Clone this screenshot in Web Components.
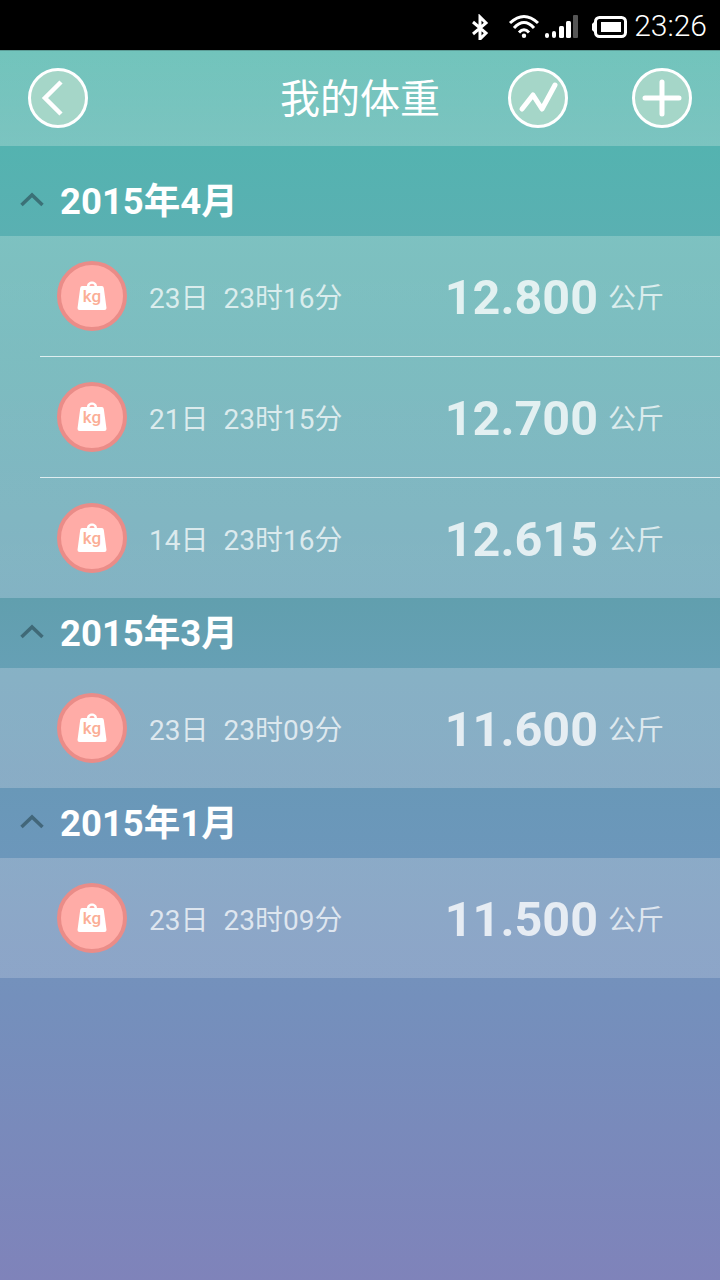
<!DOCTYPE html>
<html lang="zh">
<head>
<meta charset="utf-8">
<title>我的体重</title>
<style>
  html, body { margin: 0; padding: 0; }
  body {
    width: 720px;
    height: 1280px;
    overflow: hidden;
    font-family: Roboto, "Noto Sans CJK SC", sans-serif;
    background: #000;
  }
</style>
</head>
<body>
<weight-app>
  <status-bar slot="status" time="23:26"></status-bar>
  <app-header slot="header" title="我的体重"></app-header>
  <month-group label="2015年4月" tone="#54b3b0,#5ab0b2" wash=".1,.14" first>
    <weight-row day="23日" time="23时16分" value="12.800"></weight-row>
    <weight-row day="21日" time="23时15分" value="12.700"></weight-row>
    <weight-row day="14日" time="23时16分" value="12.615"></weight-row>
  </month-group>
  <month-group label="2015年3月" tone="#619fae,#66a0b5" wash=".16,.17">
    <weight-row day="23日" time="23时09分" value="11.600"></weight-row>
  </month-group>
  <month-group label="2015年1月" tone="#6998b8,#6c97bb" wash=".18,.18">
    <weight-row day="23日" time="23时09分" value="11.500"></weight-row>
  </month-group>
</weight-app>

<script>
class WeightApp extends HTMLElement {
  constructor() {
    super();
    this.attachShadow({ mode: 'open' });
    this.shadowRoot.innerHTML = `
      <style>
        :host { display: flex; flex-direction: column; width: 720px; height: 1280px; }
        main {
          flex: 1;
          display: flex;
          flex-direction: column;
          background: linear-gradient(180deg, #72c4bc 0%, #6cb4b8 25%, #7490bc 77%, #7f83ba 100%);
        }
      </style>
      <slot name="status"></slot>
      <main>
        <slot name="header"></slot>
        <slot></slot>
      </main>
    `;
  }
}

class StatusBar extends HTMLElement {
  constructor() {
    super();
    this.attachShadow({ mode: 'open' });
  }

  connectedCallback() {
    this.shadowRoot.innerHTML = `
      <style>
        :host {
          display: flex;
          align-items: center;
          justify-content: flex-end;
          height: 50px;
          background: #000;
          color: #fff;
          padding-right: 13px;
          box-sizing: border-box;
          font: 300 30px Roboto, sans-serif;
        }
        svg { display: block; }
        .bt { margin: 4px 17px 0 0; }
        .wifi { margin: 0 4px 0 0; }
        .signal { margin: 0 13px 0 0; }
        .battery { margin: 0 5px 0 0; }
      </style>
      <svg class="bt" width="20" height="26" viewBox="0 0 20 26" fill="none" stroke="#fff" stroke-width="3">
        <path d="M3 8 16 19 10 25V3L16 9 3 20"/>
      </svg>
      <svg class="wifi" width="34" height="26" viewBox="0 0 34 26" fill="none" stroke="#fff" stroke-width="3">
        <path d="M3 11Q17-2 31 11"/>
        <path d="M7 16Q17 5 27 16"/>
        <path d="M12 20.500Q17 15 22 20.500"/>
        <circle cx="17" cy="23.800" r="2.200" fill="#fff" stroke="none"/>
      </svg>
      <svg class="signal" width="33" height="26" viewBox="0 0 33 26">
        <rect x="0" y="21" width="4" height="5" rx="2" fill="#fff"/>
        <rect x="7" y="19" width="4" height="7" rx="2" fill="#fff"/>
        <rect x="14" y="14" width="5" height="12" rx="1.500" fill="#fff"/>
        <rect x="21" y="9" width="5" height="17" rx="1.500" fill="#fff"/>
        <rect x="28" y="3" width="5" height="23" rx="1" fill="#555"/>
      </svg>
      <svg class="battery" width="38" height="26" viewBox="0 0 38 26">
        <path d="M4 9 1 12V18L4 21Z" fill="#fff"/>
        <rect x="4.500" y="5.500" width="30" height="19" rx="4" fill="none" stroke="#fff" stroke-width="3"/>
        <rect x="10" y="10" width="20" height="10" fill="#fff"/>
      </svg>
      <span>${this.getAttribute('time')}</span>
    `;
  }
}

class RoundButton extends HTMLElement {
  constructor() {
    super();
    this.attachShadow({ mode: 'open' });
    this.shadowRoot.innerHTML = `
      <style>
        :host {
          display: flex;
          width: 60px;
          height: 60px;
          box-sizing: border-box;
          border: 3px solid #fff;
          border-radius: 50%;
          background: #a5d6c8;
          align-items: center;
          justify-content: center;
        }
      </style>
      <slot></slot>
    `;
  }
}

class AppHeader extends HTMLElement {
  constructor() {
    super();
    this.attachShadow({ mode: 'open' });
  }

  connectedCallback() {
    this.shadowRoot.innerHTML = `
      <style>
        :host {
          display: grid;
          grid-template-columns: 60px 1fr 60px 64px 60px;
          align-items: center;
          height: 96px;
          box-sizing: border-box;
          padding: 0 28px;
          background: linear-gradient(180deg, rgba(255,255,255,0) 0%, rgba(255,255,255,.08) 100%);
          box-shadow: inset 0 1px 0 rgba(0,0,0,.2);
        }
        h1 {
          margin: -4px -124px 0 0;
          text-align: center;
          color: #fff;
          font: 400 40px "Noto Sans CJK SC", sans-serif;
        }
        svg { display: block; }
      </style>
      <round-button>
        <svg width="54" height="54" viewBox="0 0 54 54" fill="none" stroke="#fff" stroke-width="4.500">
          <path d="M30 11 14 27 30 43"/>
        </svg>
      </round-button>
      <h1>${this.getAttribute('title')}</h1>
      <round-button>
        <svg width="54" height="54" viewBox="0 0 54 54" fill="none" stroke="#fff" stroke-width="5" stroke-linecap="round" stroke-linejoin="round">
          <path d="M11 38 22 24 31 38 44 14"/>
        </svg>
      </round-button>
      <span></span>
      <round-button>
        <svg width="54" height="54" viewBox="0 0 54 54" fill="none" stroke="#fff" stroke-width="5" stroke-linecap="round">
          <path d="M27 11V43M10 27H44"/>
        </svg>
      </round-button>
    `;
  }
}

class MonthGroup extends HTMLElement {
  constructor() {
    super();
    this.attachShadow({ mode: 'open' });
  }

  connectedCallback() {
    const [from, to] = this.getAttribute('tone').split(',');
    const [washTop, washBottom] = this.getAttribute('wash').split(',');
    this.shadowRoot.innerHTML = `
      <style>
        :host { display: block; }
        header {
          display: flex;
          align-items: center;
          height: 70px;
          box-sizing: border-box;
          padding-left: 19px;
          gap: 15px;
          color: #fff;
          background: linear-gradient(180deg, ${from}, ${to});
          font: 700 36.500px Roboto, "Noto Sans CJK SC", sans-serif;
        }
        :host([first]) header {
          height: 90px;
          padding-top: 20px;
        }
        svg { display: block; margin-top: -5px; }
        header span { margin-top: -5px; }
        .rows {
          display: block;
          background: linear-gradient(180deg, rgba(255,255,255,${washTop}), rgba(255,255,255,${washBottom}));
        }
      </style>
      <header>
        <svg width="26" height="16" viewBox="0 0 26 16" fill="none" stroke="rgba(40,70,80,.6)" stroke-width="3.500">
          <path d="M2.500 14 13 4 23.500 14"/>
        </svg>
        <span>${this.getAttribute('label')}</span>
      </header>
      <div class="rows"><slot></slot></div>
    `;
  }
}

class WeightRow extends HTMLElement {
  constructor() {
    super();
    this.attachShadow({ mode: 'open' });
  }

  connectedCallback() {
    this.shadowRoot.innerHTML = `
      <style>
        :host {
          display: flex;
          align-items: center;
          height: 120px;
          padding: 0 56px 0 57px;
          position: relative;
          color: rgba(255, 255, 255, .72);
        }
        :host(:not(:last-child)) { height: 121px; padding-bottom: 1px; box-sizing: border-box; }
        :host(:not(:last-child))::after {
          content: '';
          position: absolute;
          left: 40px;
          right: 0;
          bottom: 0;
          height: 1px;
          background: rgba(255, 255, 255, .75);
        }
        .badge {
          flex: none;
          width: 70px;
          height: 70px;
          box-sizing: border-box;
          border: 4px solid #ea8c88;
          border-radius: 50%;
          background: #ffaca7;
          display: flex;
          align-items: center;
          justify-content: center;
          position: relative;
        }
        .badge svg { display: block; margin-top: -2px; }
        .badge b {
          position: absolute;
          left: 0;
          right: 0;
          top: 21px;
          text-align: center;
          color: #fbae96;
          font: 500 17px Roboto, sans-serif;
        }
        .when {
          flex: 1;
          margin-left: 22px;
          display: flex;
          gap: 15px;
          font: 400 28px Roboto, "Noto Sans CJK SC", sans-serif;
        }
        .value {
          margin-top: 2px;
          color: rgba(255, 255, 255, .78);
          font: 700 48.500px Roboto, sans-serif;
          white-space: nowrap;
        }
        .unit {
          margin-left: 10px;
          font: 400 28px "Noto Sans CJK SC", sans-serif;
        }
      </style>
      <div class="badge">
        <svg width="30" height="32" viewBox="0 0 30 32">
          <path fill="#fff" d="M5 7H10C10 1 20 1 20 7H25Q26.500 7 26.800 9L29.500 29Q29.500 31 27.500 31H2.500Q.5 31 .5 29L3.200 9Q3.500 7 5 7ZM12.500 7H17.500C17.500 4 12.500 4 12.500 7Z"/>
        </svg>
        <b>kg</b>
      </div>
      <div class="when"><span>${this.getAttribute('day')}</span><span>${this.getAttribute('time')}</span></div>
      <div class="value">${this.getAttribute('value')}</div>
      <div class="unit">公斤</div>
    `;
  }
}

customElements.define('weight-app', WeightApp);
customElements.define('status-bar', StatusBar);
customElements.define('round-button', RoundButton);
customElements.define('app-header', AppHeader);
customElements.define('month-group', MonthGroup);
customElements.define('weight-row', WeightRow);
</script>
</body>
</html>
